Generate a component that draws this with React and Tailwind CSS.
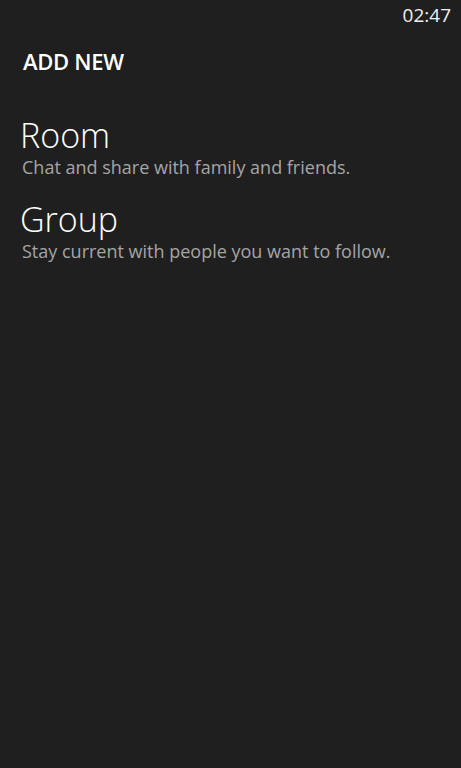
export default function App() {
  return (
    <div className="w-[461px] h-[768px] bg-[#1f1f1f] text-white overflow-hidden" style={{ fontFamily: '"Open Sans", "Noto Sans", sans-serif' }}>
      <div className="flex justify-end pr-[10px] pt-[2px] h-[30px]">
        <span className="text-[19px] leading-[26px] text-[#f0f0f0]">02:47</span>
      </div>
      <div className="pl-[23px] pt-[16px]">
        <h1 className="text-[22px] leading-[30px] font-semibold tracking-[-0.3px]">ADD NEW</h1>
      </div>
      <div className="pl-[20px] pt-[39px] flex flex-col gap-[19px]">
        <div className="flex flex-col">
          <div className="text-[34px] leading-[40px] font-light">Room</div>
          <div className="text-[18px] leading-[25px] text-[#a5a5a5] pl-[2px]">Chat and share with family and friends.</div>
        </div>
        <div className="flex flex-col">
          <div className="text-[34px] leading-[40px] font-light">Group</div>
          <div className="text-[18px] leading-[25px] text-[#a5a5a5] pl-[2px]">Stay current with people you want to follow.</div>
        </div>
      </div>
    </div>
  );
}
